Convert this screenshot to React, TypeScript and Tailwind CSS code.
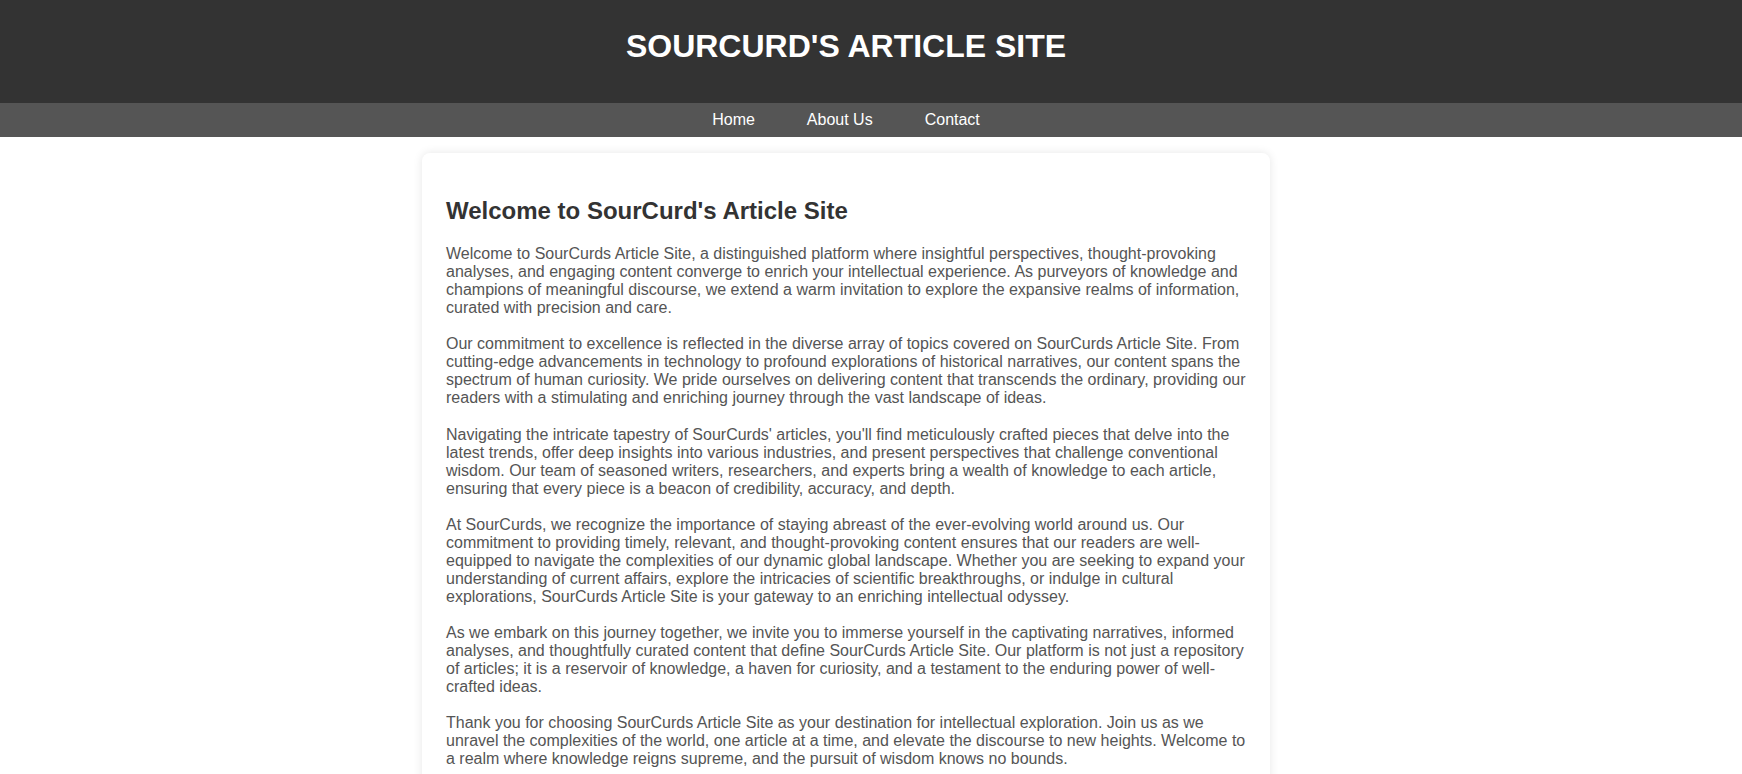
import React from 'react';

const paragraphs: string[] = [
  "Welcome to SourCurds Article Site, a distinguished platform where insightful perspectives, thought-provoking analyses, and engaging content converge to enrich your intellectual experience. As purveyors of knowledge and champions of meaningful discourse, we extend a warm invitation to explore the expansive realms of information, curated with precision and care.",
  "Our commitment to excellence is reflected in the diverse array of topics covered on SourCurds Article Site. From cutting-edge advancements in technology to profound explorations of historical narratives, our content spans the spectrum of human curiosity. We pride ourselves on delivering content that transcends the ordinary, providing our readers with a stimulating and enriching journey through the vast landscape of ideas.",
  "Navigating the intricate tapestry of SourCurds' articles, you'll find meticulously crafted pieces that delve into the latest trends, offer deep insights into various industries, and present perspectives that challenge conventional wisdom. Our team of seasoned writers, researchers, and experts bring a wealth of knowledge to each article, ensuring that every piece is a beacon of credibility, accuracy, and depth.",
  "At SourCurds, we recognize the importance of staying abreast of the ever-evolving world around us. Our commitment to providing timely, relevant, and thought-provoking content ensures that our readers are well-equipped to navigate the complexities of our dynamic global landscape. Whether you are seeking to expand your understanding of current affairs, explore the intricacies of scientific breakthroughs, or indulge in cultural explorations, SourCurds Article Site is your gateway to an enriching intellectual odyssey.",
  "As we embark on this journey together, we invite you to immerse yourself in the captivating narratives, informed analyses, and thoughtfully curated content that define SourCurds Article Site. Our platform is not just a repository of articles; it is a reservoir of knowledge, a haven for curiosity, and a testament to the enduring power of well-crafted ideas.",
  "Thank you for choosing SourCurds Article Site as your destination for intellectual exploration. Join us as we unravel the complexities of the world, one article at a time, and elevate the discourse to new heights. Welcome to a realm where knowledge reigns supreme, and the pursuit of wisdom knows no bounds.",
];

const navLinks = ['Home', 'About Us', 'Contact'];

const App: React.FC = () => {
  return (
    <div className="min-h-screen bg-white font-['Liberation_Sans',Arial,sans-serif]">
      {/* Header */}
      <header className="bg-[#333333] text-white">
        <div className="w-[1692px] h-[103px] flex justify-center pt-[27px]">
          <h1 className="text-[32px] font-bold leading-[38px] h-[38px]">SOURCURD'S ARTICLE SITE</h1>
        </div>
      </header>

      {/* Nav */}
      <nav className="bg-[#555555]">
        <div className="w-[1692px] flex justify-center gap-[52px] py-2 leading-[18px] text-base text-white">
          {navLinks.map((link) => (
            <a key={link} href="#" className="text-white">{link}</a>
          ))}
        </div>
      </nav>

      {/* Main card */}
      <div className="w-[1692px] flex justify-center pt-4">
        <main className="w-[848px] bg-white rounded-lg shadow-[0_0_10px_rgba(0,0,0,0.1)] px-6 pt-[2px] pb-6">
          <h2 className="text-2xl font-bold text-[#333333] leading-[28px] mt-[42px] mb-5">Welcome to SourCurd's Article Site</h2>
          {paragraphs.map((p, i) => (
            <p key={i} className="text-base leading-[18px] text-[#555555] mb-[18.3px]">{p}</p>
          ))}
        </main>
      </div>
    </div>
  );
};

export default App;
